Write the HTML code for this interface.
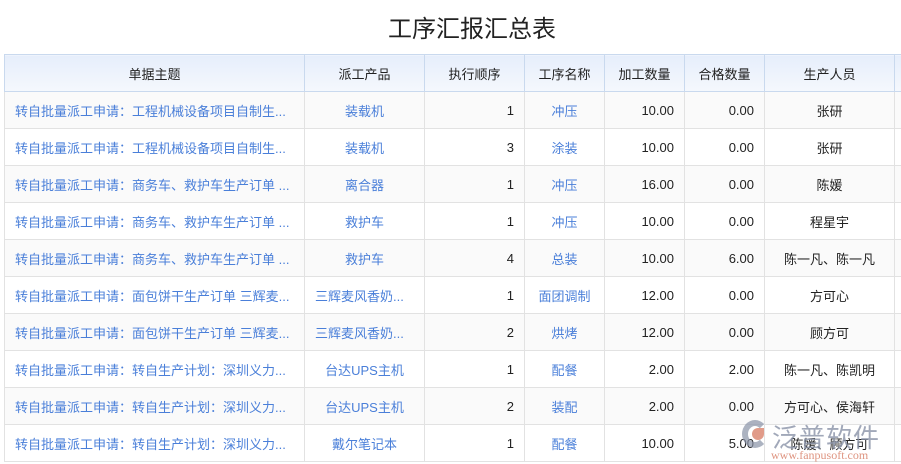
<!DOCTYPE html>
<html><head><meta charset="utf-8"><style>
*{margin:0;padding:0;box-sizing:border-box}
body{width:901px;height:464px;overflow:hidden;background:#fff;font-family:"Liberation Sans","Noto Sans CJK SC",sans-serif;font-size:13px;color:#222;position:relative}
h1{position:absolute;top:9px;left:388px;font-size:24px;font-weight:normal;color:#222;letter-spacing:0px;white-space:nowrap}
table{position:absolute;top:54px;left:4px;width:902px;border-collapse:collapse;table-layout:fixed}
td,th{height:37px;border:1px solid #e2e2e2;white-space:nowrap;overflow:hidden;padding:0 10px;font-weight:normal}
th{background:linear-gradient(#e6eefb,#f5f8fd);border-color:#c9d9ee;text-align:center;color:#222}
tr:nth-child(even) td{background:#fafafa}
.l{color:#4a7fd9}
.c{text-align:center}.r{text-align:right}
.wm{position:absolute;left:772px;top:418px;color:#8a93a8;font-size:26px;letter-spacing:1px;opacity:.8}
.wm2{position:absolute;left:771px;top:448px;color:#d9826b;font-size:12px;font-family:"Liberation Serif",serif;opacity:.85}
.logo{position:absolute;left:742px;top:420px;width:26px;height:28px;border:6px solid #8a93a8;border-radius:50%;border-right-color:transparent;opacity:.7}
.logo2{position:absolute;left:752px;top:428px;width:12px;height:12px;background:#d9826b;border-radius:50% 0 50% 50%;opacity:.8}
</style></head><body>
<h1>工序汇报汇总表</h1>
<table>
<colgroup><col style="width:300px"><col style="width:120px"><col style="width:100px"><col style="width:80px"><col style="width:80px"><col style="width:80px"><col style="width:130px"><col style="width:12px"></colgroup>
<tr><th>单据主题</th><th>派工产品</th><th>执行顺序</th><th>工序名称</th><th>加工数量</th><th>合格数量</th><th>生产人员</th><th></th></tr>
<tr><td class="l">转自批量派工申请：工程机械设备项目自制生...</td><td class="l c">装载机</td><td class="r">1</td><td class="l c">冲压</td><td class="r">10.00</td><td class="r">0.00</td><td class="c">张研</td><td></td></tr>
<tr><td class="l">转自批量派工申请：工程机械设备项目自制生...</td><td class="l c">装载机</td><td class="r">3</td><td class="l c">涂装</td><td class="r">10.00</td><td class="r">0.00</td><td class="c">张研</td><td></td></tr>
<tr><td class="l">转自批量派工申请：商务车、救护车生产订单 ...</td><td class="l c">离合器</td><td class="r">1</td><td class="l c">冲压</td><td class="r">16.00</td><td class="r">0.00</td><td class="c">陈媛</td><td></td></tr>
<tr><td class="l">转自批量派工申请：商务车、救护车生产订单 ...</td><td class="l c">救护车</td><td class="r">1</td><td class="l c">冲压</td><td class="r">10.00</td><td class="r">0.00</td><td class="c">程星宇</td><td></td></tr>
<tr><td class="l">转自批量派工申请：商务车、救护车生产订单 ...</td><td class="l c">救护车</td><td class="r">4</td><td class="l c">总装</td><td class="r">10.00</td><td class="r">6.00</td><td class="c">陈一凡、陈一凡</td><td></td></tr>
<tr><td class="l">转自批量派工申请：面包饼干生产订单 三辉麦...</td><td class="l">三辉麦风香奶...</td><td class="r">1</td><td class="l c">面团调制</td><td class="r">12.00</td><td class="r">0.00</td><td class="c">方可心</td><td></td></tr>
<tr><td class="l">转自批量派工申请：面包饼干生产订单 三辉麦...</td><td class="l">三辉麦风香奶...</td><td class="r">2</td><td class="l c">烘烤</td><td class="r">12.00</td><td class="r">0.00</td><td class="c">顾方可</td><td></td></tr>
<tr><td class="l">转自批量派工申请：转自生产计划：深圳义力...</td><td class="l c">台达UPS主机</td><td class="r">1</td><td class="l c">配餐</td><td class="r">2.00</td><td class="r">2.00</td><td class="c">陈一凡、陈凯明</td><td></td></tr>
<tr><td class="l">转自批量派工申请：转自生产计划：深圳义力...</td><td class="l c">台达UPS主机</td><td class="r">2</td><td class="l c">装配</td><td class="r">2.00</td><td class="r">0.00</td><td class="c">方可心、侯海轩</td><td></td></tr>
<tr><td class="l">转自批量派工申请：转自生产计划：深圳义力...</td><td class="l c">戴尔笔记本</td><td class="r">1</td><td class="l c">配餐</td><td class="r">10.00</td><td class="r">5.00</td><td class="c">陈媛、顾方可</td><td></td></tr>
</table>
<div class="logo"></div><div class="logo2"></div>
<div class="wm">泛普软件</div>
<div class="wm2">www.fanpusoft.com</div>
</body></html>
